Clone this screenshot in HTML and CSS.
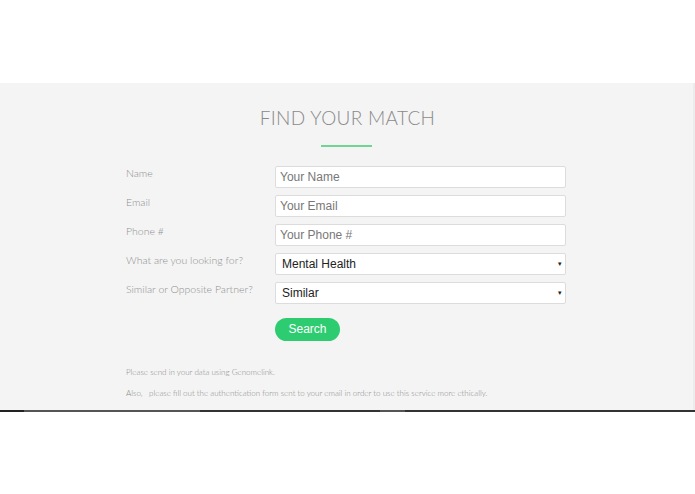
FILE: index.html
```html
<!DOCTYPE html>
<html>
<head>
<meta charset="utf-8">
<link rel="stylesheet" href="styles.css">
</head>
<body>
<div class="top"></div>
<section class="match">
  <h1 class="title">FIND YOUR MATCH</h1>
  <div class="rule"></div>
  <form class="form">
    <label class="lbl">Name</label>
    <input class="field" type="text" placeholder="Your Name">
    <label class="lbl">Email</label>
    <input class="field" type="text" placeholder="Your Email">
    <label class="lbl">Phone #</label>
    <input class="field" type="text" placeholder="Your Phone #">
    <label class="lbl">What are you looking for?</label>
    <div class="sel"><span>Mental Health</span><span class="arrow">&#9662;</span></div>
    <label class="lbl">Similar or Opposite Partner?</label>
    <div class="sel"><span>Similar</span><span class="arrow">&#9662;</span></div>
    <span></span>
    <div class="btnrow"><button type="button" class="btn">Search</button></div>
  </form>
  <p class="note first">Please send in your data using Genomelink.</p>
  <p class="note">Also,&nbsp;&nbsp; please fill out the authentication form sent to your email in order to use this service more ethically.</p>
</section>
<div class="bar"></div>
</body>
</html>
```
FILE: styles.css
```css
html, body { margin: 0; padding: 0; background: #fff; }
body { font-family: Lato, "Liberation Sans", sans-serif; width: 695px; }
.top { height: 83px; background: #fff; }
.match {
  background: #f4f4f4;
  height: 327px;
  box-sizing: border-box;
  padding-top: 23px;
  border-right: 2px solid #ececec;
}
.title {
  margin: 0;
  text-align: center;
  font-weight: 300;
  font-size: 19px;
  letter-spacing: 0.3px;
  color: #8a8a8a;
  line-height: 24px;
  padding-left: 2px;
}
.rule {
  width: 51px;
  height: 2px;
  background: #6fd593;
  margin: 15px auto 0 321px;
}
.form {
  width: 440px;
  margin: 19px 0 0 126px;
  display: grid;
  grid-template-columns: 149px 291px;
  row-gap: 7px;
}
.lbl {
  font-size: 10.5px;
  font-weight: 300;
  color: #8f8f8f;
  line-height: 14px;
  padding-top: 0px;
}
.field, .sel {
  box-sizing: border-box;
  height: 22px;
  width: 291px;
  background: #fff;
  border: 1px solid #dcdcdc;
  border-radius: 2px;
  font-family: "Liberation Sans", Arial, sans-serif;
  font-size: 12px;
  padding: 0 4px;
  margin: 0;
  outline: none;
}
.field::placeholder { color: #777; }
.sel {
  display: flex;
  align-items: center;
  justify-content: space-between;
  padding: 0 3px 0 6px;
  color: #222;
}
.arrow { font-size: 7px; color: #222; }
.btnrow { padding-top: 6px; }
.btn {
  width: 65px;
  height: 23px;
  border: 0;
  border-radius: 12px;
  background: #2ecc71;
  color: #fff;
  font-family: "Liberation Sans", Arial, sans-serif;
  font-size: 12px;
  padding: 0;
  margin: 0;
}
.note {
  margin: 0 0 0 126px;
  font-size: 8px;
  font-weight: 300;
  color: #8a8a8a;
  line-height: 10px;
}
.note.first { margin-top: 26px; margin-bottom: 11px; }
.bar {
  height: 2px;
  background: linear-gradient(to right, #222 0 24px, #555 24px 200px, #333 200px 380px, #555 380px 405px, #333 405px);
}
```
